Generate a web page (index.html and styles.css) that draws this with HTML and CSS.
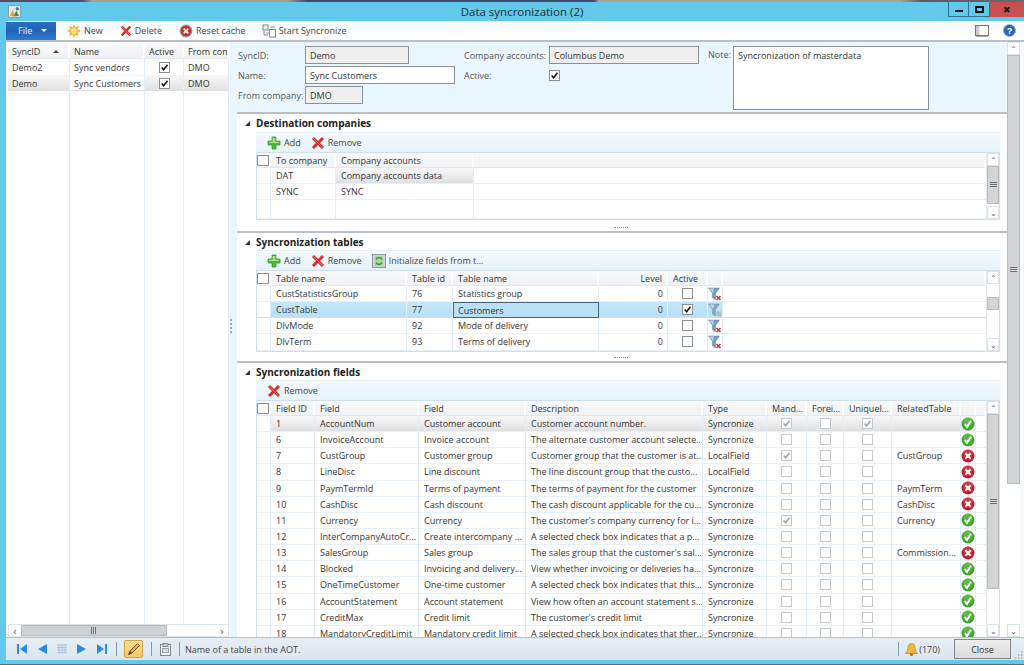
FILE: index.html
```html
<!DOCTYPE html>
<html lang="en">
<head>
<meta charset="utf-8">
<title>Data syncronization (2)</title>
<link rel="stylesheet" href="styles.css">
</head>
<body>
<svg class="defs" width="0" height="0" aria-hidden="true">
  <symbol id="i-ok" viewBox="0 0 14 14"><circle cx="7" cy="7" r="6.5" fill="#3fa52c"/><circle cx="7" cy="5" r="4.5" fill="#6fc455" opacity=".6"/><path d="M3.8 7.2 6 10l4-6.2" fill="none" stroke="#fff" stroke-width="2"/></symbol>
  <symbol id="i-err" viewBox="0 0 14 14"><circle cx="7" cy="7" r="6.5" fill="#b9202a"/><circle cx="7" cy="5" r="4.5" fill="#d9535a" opacity=".5"/><path d="M4.3 4.3l5.4 5.4M9.7 4.3 4.3 9.7" fill="none" stroke="#fff" stroke-width="2"/></symbol>
  <symbol id="i-fx" viewBox="0 0 14 14"><path d="M.5 1h11L7.5 6.5V13L4.5 11V6.500Z" fill="#6f9cc0" stroke="#7c8fa0" stroke-width=".6"/><path d="M1.500 1.500h4.500L5 6Z" fill="#b5d3e8"/><path d="M8.500 9l4 4m0-4-4 4" stroke="#d0352f" stroke-width="1.600"/></symbol>
  <symbol id="i-fg" viewBox="0 0 14 14"><path d="M.5 1h11L7.5 6.5V13L4.5 11V6.500Z" fill="#7fa5c4" stroke="#8d9eae" stroke-width=".6"/><path d="M1.500 1.500h4.500L5 6Z" fill="#c2dcee"/><rect x="8.500" y="8.500" width="5" height="5" fill="#b5bcc2"/></symbol>
  <symbol id="i-add" viewBox="0 0 14 14"><path d="M5 1h4v4h4v4H9v4H5V9H1V5h4Z" fill="#55b53f" stroke="#3d9a2c" stroke-width=".8"/><path d="M5.700 2h2.600v3.700H12V7H2V5.700h3.700Z" fill="#a6e08e"/></symbol>
  <symbol id="i-del" viewBox="0 0 14 14"><path d="M2 2l10 10M12 2 2 12" fill="none" stroke="#d3302a" stroke-width="3"/><path d="M2 2l10 10" fill="none" stroke="#ee6a5f" stroke-width="1"/></symbol>
  <symbol id="i-new" viewBox="0 0 14 14"><path d="M7 0l1.500 3.500L12 1.700l-1.300 3.600L14 7l-3.300 1.500L12 12l-3.500-1.500L7 14l-1.500-3.500L2 12l1.300-3.500L0 7l3.300-1.700L2 1.700l3.500 1.800Z" fill="#f3b33d"/><circle cx="7" cy="7" r="3" fill="#fbe08a"/></symbol>
  <symbol id="i-reset" viewBox="0 0 14 14"><circle cx="7" cy="7" r="6.500" fill="#9d9da0"/><circle cx="7" cy="7" r="5.200" fill="#c92a2e"/><path d="M4.700 4.700l4.600 4.600M9.300 4.700 4.700 9.300" stroke="#fff" stroke-width="1.800"/></symbol>
  <symbol id="i-sync" viewBox="0 0 14 14"><rect x="1" y="1" width="5" height="5" fill="#eef0f2" stroke="#7d868d"/><rect x="7.500" y="5.500" width="6" height="7.500" fill="#fff" stroke="#7d868d"/><path d="M2 7v4h4" fill="none" stroke="#7d868d"/><path d="M4 9h3M8.500 3H13" stroke="#8b949a"/></symbol>
  <symbol id="i-init" viewBox="0 0 14 14"><rect x=".5" y=".5" width="13" height="13" fill="#cdd5d9" stroke="#8e979c"/><rect x="3" y="2" width="8" height="10" fill="#a9d6a0"/><path d="M4 5.500c1-2.500 5-2.500 6 0M10 8.500c-1 2.500-5 2.500-6 0" fill="none" stroke="#2f8c3a" stroke-width="1.400"/></symbol>
  <symbol id="i-check" viewBox="0 0 10 10"><path d="M1.800 5 4 7.500 8.300 2" fill="none" stroke="currentColor" stroke-width="1.700"/></symbol>
  <symbol id="i-grip" viewBox="0 0 7 6"><path d="M0 .5h7M0 2.500h7M0 4.500h7" stroke="#6d7478" stroke-width="1"/></symbol>
</svg>
<div class="page">
  <div class="strip"></div>
  <header class="titlebar">
    <svg class="appicon" viewBox="0 0 14 14" width="13" height="13"><rect x=".5" y=".5" width="13" height="13" fill="#dfe7ee" stroke="#8b98a4"/><path d="M2 12 5 5l3 7Z" fill="#e5a52e"/><path d="M6 12l3-6 3 6Z" fill="#4b8f3f"/><circle cx="10" cy="4" r="1.800" fill="#3e78c4"/></svg>
    <h1 class="wintitle">Data syncronization (2)</h1>
    <div class="winbtns">
      <span class="wb wb-min"><i></i></span>
      <span class="wb wb-max"><i></i></span>
      <span class="wb wb-close">&#10006;</span>
    </div>
  </header>
  <nav class="ribbon">
    <button class="filebtn">File<i></i></button>
    <span class="tool t-new"><svg class="ic14"><use href="#i-new"/></svg>New</span>
    <span class="tool t-del"><svg class="ic12"><use href="#i-del"/></svg>Delete</span>
    <span class="tool t-reset"><svg class="ic14"><use href="#i-reset"/></svg>Reset cache</span>
    <span class="tool t-sync"><svg class="ic14"><use href="#i-sync"/></svg>Start Syncronize</span>
    <span class="ribbon-right">
      <svg class="book" viewBox="0 0 14 12" width="14" height="12"><rect x=".5" y=".5" width="13" height="10" fill="#fff" stroke="#777"/><rect x="1" y="1" width="3.500" height="9" fill="#c9ced2"/><path d="M1 11.500h12" stroke="#aaa"/></svg>
      <svg class="help" viewBox="0 0 14 14" width="13" height="13"><circle cx="7" cy="7" r="6.500" fill="#2f65ad" stroke="#9fb4cb"/><text x="7" y="10.500" text-anchor="middle" class="helpq">?</text></svg>
    </span>
  </nav>
  <main class="main">
    <aside class="list">
      <div class="lhead lrow">
        <div class="c">SyncID<i class="sort"></i></div><div class="c">Name</div><div class="c">Active</div><div class="c">From com</div>
      </div>
      <div class="lrow">
        <div class="c">Demo2</div><div class="c">Sync vendors</div><div class="c ctr"><span class="cb on"><svg><use href="#i-check"/></svg></span></div><div class="c">DMO</div>
      </div>
      <div class="lrow sel">
        <div class="c">Demo</div><div class="c cur">Sync Customers</div><div class="c ctr"><span class="cb on"><svg><use href="#i-check"/></svg></span></div><div class="c">DMO</div>
      </div>
      <div class="lrow fill"><div class="c"></div><div class="c"></div><div class="c"></div><div class="c"></div></div>
      <div class="hscroll">
        <span class="arrow">&#8249;</span>
        <span class="hthumb"><svg class="gripv" viewBox="0 0 6 7" width="6" height="7"><path d="M.5 0v7M2.500 0v7M4.500 0v7" stroke="#6d7478"/></svg></span>
        <span class="htrack"></span>
        <span class="arrow">&#8250;</span>
      </div>
    </aside>
    <div class="splitter"><i></i></div>
    <section class="detail">
      <div class="detail-inner">
        <form class="form">
          <div class="fcol f1">
            <label>SyncID:</label><span class="fld ro w104">Demo</span>
            <label>Name:</label><span class="fld w150">Sync Customers</span>
            <label>From company:</label><span class="fld ro w58">DMO</span>
          </div>
          <div class="fcol f2">
            <label>Company accounts:</label><span class="fld ro w150">Columbus Demo</span>
            <label>Active:</label><span class="cbwrap"><span class="cb on"><svg><use href="#i-check"/></svg></span></span>
          </div>
          <div class="f3">
            <label>Note:</label><span class="fld note">Syncronization of masterdata</span>
          </div>
        </form>

        <div class="sec s1">
          <h2 class="sechead"><i class="tri"></i>Destination companies</h2>
          <div class="gridbar">
            <span class="tool"><svg class="ic14"><use href="#i-add"/></svg>Add</span>
            <span class="tool"><svg class="ic14"><use href="#i-del"/></svg>Remove</span>
          </div>
          <div class="grid g1">
            <div class="gbody">
              <div class="row head"><div class="c rh"><span class="cb big"></span></div><div class="c">To company</div><div class="c">Company accounts</div><div class="c"></div></div>
              <div class="row"><div class="c rh"></div><div class="c">DAT</div><div class="c hl">Company accounts data</div><div class="c"></div></div>
              <div class="row"><div class="c rh"></div><div class="c">SYNC</div><div class="c">SYNC</div><div class="c"></div></div>
              <div class="row fill"><div class="c rh"></div><div class="c"></div><div class="c"></div><div class="c"></div></div>
            </div>
            <div class="vscroll"><span class="arrow up">&#8963;</span><span class="thumb t-a"><svg class="grip"><use href="#i-grip"/></svg></span><span class="track"></span><span class="arrow dn">&#8964;</span></div>
          </div>
          <div class="dots"></div>
        </div>

        <div class="sec s2">
          <h2 class="sechead"><i class="tri"></i>Syncronization tables</h2>
          <div class="gridbar">
            <span class="tool"><svg class="ic14"><use href="#i-add"/></svg>Add</span>
            <span class="tool"><svg class="ic14"><use href="#i-del"/></svg>Remove</span>
            <span class="tool"><svg class="ic14"><use href="#i-init"/></svg>Initialize fields from t...</span>
          </div>
          <div class="grid g2">
            <div class="gbody">
              <div class="row head"><div class="c rh"><span class="cb big"></span></div><div class="c">Table name</div><div class="c">Table id</div><div class="c">Table name</div><div class="c num">Level</div><div class="c">Active</div><div class="c"></div><div class="c"></div></div>
              <div class="row"><div class="c rh"></div><div class="c">CustStatisticsGroup</div><div class="c">76</div><div class="c">Statistics group</div><div class="c num">0</div><div class="c ctr"><span class="cb"></span></div><div class="c ico"><svg class="ic14"><use href="#i-fx"/></svg></div><div class="c"></div></div>
              <div class="row cur-row"><div class="c rh"></div><div class="c">CustTable</div><div class="c">77</div><div class="c focus">Customers</div><div class="c num">0</div><div class="c ctr"><span class="cb on"><svg><use href="#i-check"/></svg></span></div><div class="c ico"><svg class="ic14"><use href="#i-fg"/></svg></div><div class="c blank"></div></div>
              <div class="row"><div class="c rh"></div><div class="c">DlvMode</div><div class="c">92</div><div class="c">Mode of delivery</div><div class="c num">0</div><div class="c ctr"><span class="cb"></span></div><div class="c ico"><svg class="ic14"><use href="#i-fx"/></svg></div><div class="c"></div></div>
              <div class="row"><div class="c rh"></div><div class="c">DlvTerm</div><div class="c">93</div><div class="c">Terms of delivery</div><div class="c num">0</div><div class="c ctr"><span class="cb"></span></div><div class="c ico"><svg class="ic14"><use href="#i-fx"/></svg></div><div class="c"></div></div>
            </div>
            <div class="vscroll"><span class="arrow up">&#8963;</span><span class="track tr-b"></span><span class="thumb t-b"></span><span class="track"></span><span class="arrow dn">&#8964;</span></div>
          </div>
          <div class="dots"></div>
        </div>

        <div class="sec s3">
          <h2 class="sechead"><i class="tri"></i>Syncronization fields</h2>
          <div class="gridbar">
            <span class="tool"><svg class="ic14"><use href="#i-del"/></svg>Remove</span>
          </div>
          <div class="grid g3">
            <div class="gbody">
              <div class="row head"><div class="c rh"><span class="cb big"></span></div><div class="c">Field ID</div><div class="c">Field</div><div class="c">Field</div><div class="c">Description</div><div class="c">Type</div><div class="c">Mand...</div><div class="c">Forei...</div><div class="c">Uniquel...</div><div class="c">RelatedTable</div><div class="c"></div><div class="c"></div></div>
              <div class="row sel"><div class="c rh"></div><div class="c">1</div><div class="c">AccountNum</div><div class="c">Customer account</div><div class="c">Customer account number.</div><div class="c">Syncronize</div><div class="c ctr"><span class="cb dis on"><svg><use href="#i-check"/></svg></span></div><div class="c ctr"><span class="cb dis"></span></div><div class="c ctr"><span class="cb dis on"><svg><use href="#i-check"/></svg></span></div><div class="c"></div><div class="c ico"><svg class="ic14"><use href="#i-ok"/></svg></div><div class="c blank"></div></div>
              <div class="row"><div class="c rh"></div><div class="c">6</div><div class="c">InvoiceAccount</div><div class="c">Invoice account</div><div class="c">The alternate customer account selecte...</div><div class="c">Syncronize</div><div class="c ctr"><span class="cb dis"></span></div><div class="c ctr"><span class="cb dis"></span></div><div class="c ctr"><span class="cb dis"></span></div><div class="c"></div><div class="c ico"><svg class="ic14"><use href="#i-ok"/></svg></div><div class="c"></div></div>
              <div class="row"><div class="c rh"></div><div class="c">7</div><div class="c">CustGroup</div><div class="c">Customer group</div><div class="c">Customer group that the customer is at...</div><div class="c">LocalField</div><div class="c ctr"><span class="cb dis on"><svg><use href="#i-check"/></svg></span></div><div class="c ctr"><span class="cb dis"></span></div><div class="c ctr"><span class="cb dis"></span></div><div class="c">CustGroup</div><div class="c ico"><svg class="ic14"><use href="#i-err"/></svg></div><div class="c"></div></div>
              <div class="row"><div class="c rh"></div><div class="c">8</div><div class="c">LineDisc</div><div class="c">Line discount</div><div class="c">The line discount group that the custo...</div><div class="c">LocalField</div><div class="c ctr"><span class="cb dis"></span></div><div class="c ctr"><span class="cb dis"></span></div><div class="c ctr"><span class="cb dis"></span></div><div class="c"></div><div class="c ico"><svg class="ic14"><use href="#i-err"/></svg></div><div class="c"></div></div>
              <div class="row"><div class="c rh"></div><div class="c">9</div><div class="c">PaymTermId</div><div class="c">Terms of payment</div><div class="c">The terms of payment for the customer</div><div class="c">Syncronize</div><div class="c ctr"><span class="cb dis"></span></div><div class="c ctr"><span class="cb dis"></span></div><div class="c ctr"><span class="cb dis"></span></div><div class="c">PaymTerm</div><div class="c ico"><svg class="ic14"><use href="#i-err"/></svg></div><div class="c"></div></div>
              <div class="row"><div class="c rh"></div><div class="c">10</div><div class="c">CashDisc</div><div class="c">Cash discount</div><div class="c">The cash discount applicable for the cu...</div><div class="c">Syncronize</div><div class="c ctr"><span class="cb dis"></span></div><div class="c ctr"><span class="cb dis"></span></div><div class="c ctr"><span class="cb dis"></span></div><div class="c">CashDisc</div><div class="c ico"><svg class="ic14"><use href="#i-err"/></svg></div><div class="c"></div></div>
              <div class="row"><div class="c rh"></div><div class="c">11</div><div class="c">Currency</div><div class="c">Currency</div><div class="c">The customer's company currency for i...</div><div class="c">Syncronize</div><div class="c ctr"><span class="cb dis on"><svg><use href="#i-check"/></svg></span></div><div class="c ctr"><span class="cb dis"></span></div><div class="c ctr"><span class="cb dis"></span></div><div class="c">Currency</div><div class="c ico"><svg class="ic14"><use href="#i-ok"/></svg></div><div class="c"></div></div>
              <div class="row"><div class="c rh"></div><div class="c">12</div><div class="c">InterCompanyAutoCr...</div><div class="c">Create intercompany ...</div><div class="c">A selected check box indicates that a p...</div><div class="c">Syncronize</div><div class="c ctr"><span class="cb dis"></span></div><div class="c ctr"><span class="cb dis"></span></div><div class="c ctr"><span class="cb dis"></span></div><div class="c"></div><div class="c ico"><svg class="ic14"><use href="#i-ok"/></svg></div><div class="c"></div></div>
              <div class="row"><div class="c rh"></div><div class="c">13</div><div class="c">SalesGroup</div><div class="c">Sales group</div><div class="c">The sales group that the customer's sal...</div><div class="c">Syncronize</div><div class="c ctr"><span class="cb dis"></span></div><div class="c ctr"><span class="cb dis"></span></div><div class="c ctr"><span class="cb dis"></span></div><div class="c">Commission...</div><div class="c ico"><svg class="ic14"><use href="#i-err"/></svg></div><div class="c"></div></div>
              <div class="row"><div class="c rh"></div><div class="c">14</div><div class="c">Blocked</div><div class="c">Invoicing and delivery...</div><div class="c">View whether invoicing or deliveries ha...</div><div class="c">Syncronize</div><div class="c ctr"><span class="cb dis"></span></div><div class="c ctr"><span class="cb dis"></span></div><div class="c ctr"><span class="cb dis"></span></div><div class="c"></div><div class="c ico"><svg class="ic14"><use href="#i-ok"/></svg></div><div class="c"></div></div>
              <div class="row"><div class="c rh"></div><div class="c">15</div><div class="c">OneTimeCustomer</div><div class="c">One-time customer</div><div class="c">A selected check box indicates that this...</div><div class="c">Syncronize</div><div class="c ctr"><span class="cb dis"></span></div><div class="c ctr"><span class="cb dis"></span></div><div class="c ctr"><span class="cb dis"></span></div><div class="c"></div><div class="c ico"><svg class="ic14"><use href="#i-ok"/></svg></div><div class="c"></div></div>
              <div class="row"><div class="c rh"></div><div class="c">16</div><div class="c">AccountStatement</div><div class="c">Account statement</div><div class="c">View how often an account statement s...</div><div class="c">Syncronize</div><div class="c ctr"><span class="cb dis"></span></div><div class="c ctr"><span class="cb dis"></span></div><div class="c ctr"><span class="cb dis"></span></div><div class="c"></div><div class="c ico"><svg class="ic14"><use href="#i-ok"/></svg></div><div class="c"></div></div>
              <div class="row"><div class="c rh"></div><div class="c">17</div><div class="c">CreditMax</div><div class="c">Credit limit</div><div class="c">The customer's credit limit</div><div class="c">Syncronize</div><div class="c ctr"><span class="cb dis"></span></div><div class="c ctr"><span class="cb dis"></span></div><div class="c ctr"><span class="cb dis"></span></div><div class="c"></div><div class="c ico"><svg class="ic14"><use href="#i-ok"/></svg></div><div class="c"></div></div>
              <div class="row"><div class="c rh"></div><div class="c">18</div><div class="c">MandatoryCreditLimit</div><div class="c">Mandatory credit limit</div><div class="c">A selected check box indicates that ther...</div><div class="c">Syncronize</div><div class="c ctr"><span class="cb dis"></span></div><div class="c ctr"><span class="cb dis"></span></div><div class="c ctr"><span class="cb dis"></span></div><div class="c"></div><div class="c ico"><svg class="ic14"><use href="#i-ok"/></svg></div><div class="c"></div></div>
            </div>
            <div class="vscroll"><span class="arrow up">&#8963;</span><span class="thumb t-c"><svg class="grip"><use href="#i-grip"/></svg></span><span class="track"></span><span class="arrow dn">&#8964;</span></div>
          </div>
        </div>
      </div>
      <div class="vscroll outer"><span class="arrow up">&#8963;</span><span class="thumb t-d"><svg class="grip"><use href="#i-grip"/></svg></span><span class="track"></span><span class="arrow dn">&#8964;</span></div>
      <div class="edge"></div>
    </section>
  </main>
  <footer class="status">
    <span class="navset">
      <svg viewBox="0 0 10 10" width="10" height="10"><path d="M0 0h2v10H0ZM10 0v10L3 5Z" fill="#2b8ae0"/></svg>
      <svg viewBox="0 0 10 10" width="10" height="10"><path d="M10 0v10L1 5Z" fill="#2b8ae0"/></svg>
      <svg viewBox="0 0 10 10" width="10" height="10"><path d="M0 1h10M0 3.500h10M0 6h10M0 8.500h10M2 0v10M5 0v10M8 0v10" stroke="#a9c7e6" stroke-width="1"/></svg>
      <svg viewBox="0 0 10 10" width="10" height="10"><path d="M0 0v10l9-5Z" fill="#2b8ae0"/></svg>
      <svg viewBox="0 0 10 10" width="10" height="10"><path d="M10 0H8v10h2ZM0 0v10l7-5Z" fill="#2b8ae0"/></svg>
    </span>
    <i class="sep"></i>
    <span class="pencil"><svg viewBox="0 0 14 14" width="14" height="14"><path d="M1.500 12.500 3 9l7.500-7.500 2 2L5 11Z" fill="#e5b04a" stroke="#7a5a28"/><path d="M1.500 12.500 3 9l2 2Z" fill="#444"/></svg></span>
    <i class="sep"></i>
    <svg class="clip" viewBox="0 0 11 13" width="11" height="13"><rect x=".5" y="1.500" width="10" height="11" fill="#f2f4f5" stroke="#7f8a91"/><rect x="3" y=".5" width="5" height="3" fill="#c7ced2" stroke="#7f8a91"/><rect x="2.500" y="5.500" width="6" height="4" fill="#d8dde0" stroke="#9aa3a8"/></svg>
    <i class="sep"></i>
    <span class="hint">Name of a table in the AOT.</span>
    <i class="sep sep-r"></i>
    <svg class="bell" viewBox="0 0 13 13" width="13" height="13"><path d="M6.500 .5c2.500 0 3.500 2 3.500 4.500 0 3 2 4.500 2.500 5.500H.5C1 9.500 3 8 3 5 3 2.500 4 .5 6.500 .5Z" fill="#f0b638" stroke="#b9842a" stroke-width=".7"/><circle cx="6.500" cy="11.500" r="1.500" fill="#a86f1f"/></svg>
    <span class="count">(170)</span>
    <span class="closebtn">Close</span>
    <svg class="sizer" viewBox="0 0 9 9" width="9" height="9"><path d="M7 8h1.500M7 5h1.500M7 2h1.500M4 8h1.500M4 5h1.500M1 8h1.500" stroke="#a4adb3" stroke-width="1.500"/></svg>
  </footer>
  <div class="bottomedge"></div>
</div>
</body>
</html>
```
FILE: styles.css
```css
* { box-sizing: border-box; }
html, body { margin: 0; padding: 0; }
body {
  font-family: "Open Sans", "Noto Sans", "Liberation Sans", sans-serif;
  font-size: 9px;
  color: #333;
  background: #63c9ea;
  overflow: hidden;
}
.defs { position: absolute; }
.page { width: 1024px; height: 665px; display: flex; flex-direction: column; overflow: hidden; background: #63c9ea; }
.strip {
  height: 2px; flex: none;
  background: linear-gradient(90deg, #5a4660 0, #45507a 8%, #a89f8c 9%, #a89f8c 28%, #3f4a70 30%, #3f4a70 58%, #a9a594 58.5%, #a9a594 88%, #57575f 90%, #6a6a72 100%);
}
.titlebar { height: 19px; flex: none; display: flex; align-items: center; padding-left: 8px; position: relative; background: #63c9ea; }
.appicon { flex: none; }
.wintitle { flex: 1; margin: 0 0 0 -1px; text-align: center; font-size: 11.5px; font-weight: 400; color: #1d2c34; }
.winbtns { position: absolute; right: 0; top: 0; display: flex; height: 15px; }
.wb { display: flex; align-items: center; justify-content: center; border: 1px solid #2f6f8d; border-top: 0; border-left-width: 1px; height: 15px; }
.wb-min { width: 21px; }
.wb-max { width: 21px; border-left: 0; }
.wb-close { width: 34px; background: #c75050; border: 0; color: #111; font-size: 9px; }
.wb-min i { width: 8px; height: 2px; background: #111; margin-top: 3px; }
.wb-max i { width: 9px; height: 7px; border: 2px solid #111; }

.ribbon { height: 19px; flex: none; display: flex; align-items: center; margin-left: 6px; padding-right: 4px; background: linear-gradient(#f4fafe, #fff); position: relative; color: #444; }
.filebtn { width: 50px; height: 18px; border: 0; background: linear-gradient(#2a6cbd, #1f63b8 50%, #2f7ace); color: #e8f2fb; font: inherit; font-size: 9px; text-align: left; padding: 0 0 0 12px; display: flex; align-items: center; gap: 9px; }
.filebtn i { width: 0; height: 0; border: 3px solid transparent; border-top: 3px solid #fff; margin-top: 3px; }
.tool { display: inline-flex; align-items: center; gap: 3px; color: #444; }
.ic14 { width: 14px; height: 14px; flex: none; }
.ic12 { width: 12px; height: 12px; flex: none; }
.t-new { margin-left: 11px; }
.t-del { margin-left: 17px; }
.t-reset { margin-left: 17px; }
.t-sync { margin-left: 16px; }
.ribbon-right { margin-left: auto; display: flex; align-items: center; gap: 14px; padding-right: 4px; }
.helpq { font: bold 10px "Liberation Sans", sans-serif; fill: #fff; }

.main { flex: 1; min-height: 0; display: flex; margin-left: 6px; background: #eaf6fe; border-top: 2px solid #b9bfc4; box-shadow: inset 0 1px 0 #e1e7ec; }
.list { width: 224px; flex: none; display: flex; flex-direction: column; padding: 2px 1px 0 2px; background: #fff; border-top: 0; }
.lrow { display: grid; grid-template-columns: 62px 75px 39px 1fr; height: 16px; flex: none; background: #fff; overflow: hidden; }
.lrow .c { padding: 0 0 0 4px; display: flex; align-items: center; border-right: 1px solid #e3edf6; white-space: nowrap; overflow: hidden; }
.lhead { height: 15px; background: linear-gradient(#f7f8f9, #eef0f2); border-bottom: 1px solid #e3e6ea; }
.lhead .c { border-right: 2px solid #fff; justify-content: flex-start; }
.sort { width: 0; height: 0; margin-left: 13px; border: 3px solid transparent; border-bottom: 3px solid #444; margin-top: -3px; }
.lrow.fill { flex: 1; }
.lrow.sel { background: linear-gradient(#f8f8f8, #dfe0e2); }
.lrow .cur { background: #fff; margin: 0; height: 14px; align-self: center; padding-left: 4px; }
.ctr { justify-content: center; padding-left: 0 !important; }

.hscroll { height: 13px; flex: none; display: flex; border: 1px solid #dfe3e6; background: #fff; }
.hscroll .arrow { width: 12px; display: flex; align-items: center; justify-content: center; font-size: 11px; line-height: 1; color: #555; background: #fff; }
.hthumb { width: 146px; background: #cfd2d5; border: 1px solid #b6babd; display: flex; align-items: center; justify-content: center; }
.htrack { flex: 1; }

.splitter { width: 7px; flex: none; display: none; }
.detail { flex: 1; min-width: 0; display: flex; background: #eaf6fe; position: relative; }
.detail::before { content: ""; position: absolute; left: 0; top: 277px; height: 14px; width: 2px; border-left: 2px dotted #9aa6ae; }
.detail-inner { flex: 1; min-width: 0; display: flex; flex-direction: column; padding-left: 7px; overflow: hidden; }

.form { height: 70px; flex: none; display: flex; padding: 4px 0 0 1px; }
.fcol { display: grid; row-gap: 2px; grid-auto-rows: 18px; align-items: center; align-content: start; color: #555; }
.f1 { grid-template-columns: 67px auto; width: 226px; }
.f2 { grid-template-columns: 85px auto; width: 244px; }
.f3 { display: flex; align-items: flex-start; color: #555; }
.f3 label { width: 25px; line-height: 18px; }
.fld { display: flex; align-items: center; height: 18px; border: 1px solid #8c9196; background: #fff; padding-left: 4px; color: #333; }
.fld.ro { background: #efefef; }
.w104 { width: 104px; }
.w150 { width: 150px; }
.w58 { width: 58px; }
.fld.note { width: 196px; height: 64px; align-items: flex-start; padding-top: 2px; }
.cbwrap { display: flex; align-items: center; }

.cb { display: inline-flex; width: 11px; height: 11px; border: 1px solid #8a8f94; background: #fff; color: #111; flex: none; align-items: center; justify-content: center; }
.cb svg { width: 9px; height: 9px; }
.cb.dis { border-color: #c4c8cb; color: #9ea3a7; }
.cb.big { width: 12px; height: 11px; border-color: #8e9armor; }

.sec { background: #fff; border-top: 2px solid #b9bfc4; flex: none; display: flex; flex-direction: column; position: relative; }
.s1 { height: 119px; }
.s2 { height: 130px; }
.s3 { flex: 1; min-height: 0; }
.sechead { margin: 0; height: 17px; flex: none; display: flex; align-items: center; font-size: 10px; font-weight: 700; color: #222; padding: 0 0 0 19px; position: relative; }
.s1 .sechead { height: 18px; }
.tri { position: absolute; left: 8px; top: 7px; width: 0; height: 0; border-style: solid; border-width: 0 0 5px 5px; border-color: transparent transparent #333 transparent; }
.gridbar { height: 20px; flex: none; margin: 0 7px 0 19px; background: linear-gradient(#f4f9fd, #e6f2fb); border-top: 1px solid #e6f0f8; display: flex; align-items: center; padding-left: 11px; gap: 10px; color: #444; }
.grid { margin: 0 7px 0 19px; border: 1px solid #cfdfeb; display: flex; background: #fff; overflow: hidden; }
.g1 { height: 68px; }
.g2 { height: 82px; }
.g3 { flex: 1; min-height: 0; border-bottom: 0; }
.gbody { flex: 1; min-width: 0; display: flex; flex-direction: column; }
.row { display: grid; height: 16.15px; flex: none; background: #fff; }
.g1 .row { grid-template-columns: 14px 65px 138px 1fr; }
.g2 .row { grid-template-columns: 14px 136px 46px 146px 69px 40px 15px 1fr; }
.g3 .row { grid-template-columns: 14px 44px 104px 107px 177px 64px 40px 37px 48px 69px 15px 1fr; }
.row .c { display: flex; align-items: center; padding-left: 5px; border-right: 1px solid #e3edf6; border-bottom: 1px solid #e8f0f7; white-space: nowrap; overflow: hidden; min-width: 0; }
.row .c:last-child { border-right: 0; }
.row.head { height: 15px; background: linear-gradient(#f8f9fa, #eff1f3); }
.row.head .c { border-right: 2px solid #fff; border-bottom: 1px solid #e3e6ea; }
.row .rh { padding: 0; justify-content: center; background: #fff; }
.row.fill { flex: 1; }
.row .c.num { justify-content: flex-end; padding: 0 4px 0 0; }
.row .c.ico { padding: 0; justify-content: center; }
.row .c.hl { background: linear-gradient(#f8f8f8, #dfe0e2); }
.row.sel .c { background: linear-gradient(#f8f8f8, #dfe0e2); }
.row.sel .c.rh, .row.sel .c.blank { background: #fff; }
.row.cur-row .c { background: linear-gradient(#c4e6f8, #b9e0f6); border-bottom-color: #bfe3f7; }
.row.cur-row .c.rh, .row.cur-row .c.blank { background: #fff; }
.row.cur-row .c.focus { border: 1px solid #46617a; background: #b9e0f6; padding-left: 4px; }

.vscroll { width: 13px; flex: none; display: flex; flex-direction: column; background: #fff; border-left: 1px solid #e3e9ee; }
.vscroll .arrow { height: 13px; flex: none; display: flex; align-items: center; justify-content: center; font-size: 8px; line-height: 1; color: #555; border: 1px solid #dde2e6; background: #fff; }
.vscroll .thumb { flex: none; background: #d2d4d6; border: 1px solid #b8bcbf; display: flex; align-items: center; justify-content: center; }
.vscroll .track { flex: 1; }
.vscroll .track.tr-b { flex: none; height: 13px; }
.grip { width: 7px; height: 6px; }
.t-a { height: 38px; }
.t-b { height: 13px; }
.t-c { height: 175px; }
.t-d { height: 429px; }
.vscroll.outer { border-left: 0; }
.edge { width: 4px; flex: none; background: #f5f9fc; }
.dots { position: absolute; left: 377px; bottom: 3px; width: 14px; height: 1px; border-top: 1px dotted #8f979d; }

.status { height: 23px; flex: none; margin-left: 6px; display: flex; align-items: center; background: linear-gradient(#e6eef4, #dbe6ee); border-top: 1px solid #b9bfc4; padding-left: 11px; color: #555; position: relative; }
.navset { display: flex; align-items: center; gap: 10px; }
.sep { width: 1px; height: 14px; background: #7f99ad; flex: none; margin: 0 8px 0 9px; }
.pencil { width: 19px; height: 18px; flex: none; background: linear-gradient(#ffdf8f, #f8c864); border: 1px solid #d59f3c; border-radius: 2px; display: flex; align-items: center; justify-content: center; margin: 0 -1px; }
.clip { flex: none; }
.sep + .clip + .sep { margin-left: 8px; margin-right: 5px; }
.hint { color: #444; }
.sep-r { margin-left: auto; margin-right: 6px; }
.bell { flex: none; }
.count { margin: 0 14px 0 1px; color: #444; }
.closebtn { width: 57px; height: 20px; flex: none; display: flex; align-items: center; justify-content: center; background: linear-gradient(#eceded, #dcdcdc); border: 1px solid #85898c; color: #333; }
.sizer { margin: 0 1px 0 3px; flex: none; align-self: flex-end; margin-bottom: 1px; }
.bottomedge { height: 5px; flex: none; background: #63c9ea; border-bottom: 1px solid #5a6c78; }
```
